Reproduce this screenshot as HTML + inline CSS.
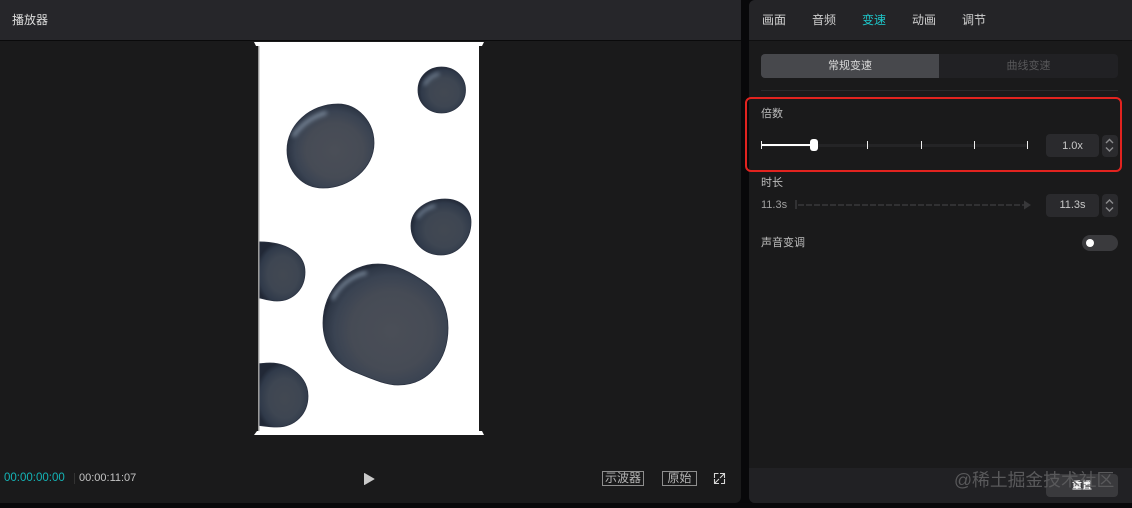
<!DOCTYPE html>
<html><head><meta charset="utf-8">
<style>
*{margin:0;padding:0;box-sizing:border-box}
html{background:#08080a}
html,body{width:1132px;height:508px;overflow:hidden;font-family:"Liberation Sans","Noto Sans CJK SC",sans-serif}
body{background:#08080a;filter:blur(.3px)}
.a{position:absolute;white-space:nowrap}
#left{left:0;top:0;width:741px;height:503px;background:#1a1a1b;border-radius:0 0 6px 0;overflow:hidden}
#lh{left:0;top:0;width:741px;height:41px;background:#26262a;border-bottom:1px solid #0a0a0b}
#right{left:749px;top:0;width:383px;height:503px;background:#1a1a1b;border-radius:6px 0 0 6px;overflow:hidden}
#rh{left:0;top:0;width:383px;height:41px;background:#242427;border-bottom:1px solid #0f0f10}
.t{font-size:12px;line-height:16px;color:#d0d0d0}
.tick{width:1px;height:8px;background:#eee;top:141px}
.inp{background:#2a2a2d;border-radius:4px;color:#c8c8c8;font-size:11px;text-align:center}
.sp{background:#2a2a2d;border-radius:4px}
.tag{border:1px solid #8e8e8e;color:#b4b4b4;font-size:12px;line-height:12px;height:15px;text-align:center;overflow:hidden}
</style></head>
<body>
<div class="a" id="left"></div>
<div class="a" id="lh"></div>
<div class="a t" style="left:12px;top:12px;color:#dedede">播放器</div>

<svg class="a" style="left:0;top:0" width="741" height="503" viewBox="0 0 741 503">
<defs>
<radialGradient id="g" cx="0.55" cy="0.55" r="0.56">
<stop offset="0" stop-color="#4a4e57"/><stop offset="0.58" stop-color="#464b55"/><stop offset="0.82" stop-color="#3a4352"/><stop offset="0.95" stop-color="#2e3746"/><stop offset="1" stop-color="#232a38"/>
</radialGradient>
<radialGradient id="s" cx="0.55" cy="0.55" r="0.56">
<stop offset="0" stop-color="#424852"/><stop offset="0.55" stop-color="#3e4652"/><stop offset="0.85" stop-color="#303a4a"/><stop offset="1" stop-color="#212836"/>
</radialGradient>
<filter id="bl" x="-40%" y="-40%" width="180%" height="180%"><feGaussianBlur stdDeviation="2"/></filter>
<clipPath id="c"><rect x="259.500" y="42" width="220" height="393"/></clipPath>
</defs>
<rect x="258" y="42" width="221" height="393" fill="#fff"/>
<rect x="258" y="42" width="1.400" height="393" fill="#9a9a9a"/>
<path d="M254 42h6v4h-4zM478 42h6l-2 4h-4zM254 435h6v-4h-3zM478 435h6l-2-4h-4z" fill="#fff"/>
<g clip-path="url(#c)" stroke="#2a3140" stroke-width=".8">
<path d="M441.500 67C455 67 465.500 77 465.500 90C465.500 103 455 113 441.500 113C428 113 418 103 418 90C418 77 428 67 441.500 67Z" fill="url(#s)"/>
<path d="M338 104C358 104 374 122 374 143C374 168 350 188 323 188C302 188 287 171 287 150C287 125 310 104 338 104Z" fill="url(#g)"/>
<path d="M445 199C460 199 471 208 471 222C471 240 458 255 441 255C424 255 411 242 411 226C411 210 427 199 445 199Z" fill="url(#s)"/>
<path d="M256 242C285 241 305 253 305 272C305 289 293 301 277 301C270 301 264 299 256 297Z" fill="url(#s)"/>
<path d="M378 264C396 264 412 273 426 283C440 293 448 308 448 328C448 360 428 385 398 385C385 385 370 378 355 372C335 364 323 345 323 323C323 290 348 264 378 264Z" fill="url(#g)"/>
<path d="M256 364C262 363.500 266 363 270 363C291 363 308 378 308 396C308 414 295 427 277 427C270 427 264 426 256 425Z" fill="url(#s)"/>
</g>
<g fill="none" stroke="#9fb0c3" stroke-linecap="round" filter="url(#bl)" opacity=".62">
<path d="M294 135C301 125 312 117 325 113" stroke-width="4"/>
<path d="M333 298C339 286 351 276 365 273" stroke-width="4"/>
<path d="M425 84C428 79 432 76 438 74" stroke-width="3"/>
<path d="M418 217C421 212 427 208 434 206" stroke-width="3"/>
</g>
<path d="M364.500 473.500L374 479L364.500 484.500Z" fill="#c9c9c9" stroke="#c9c9c9" stroke-width="1" stroke-linejoin="round"/>
<rect x="74" y="473" width="1" height="11" fill="#333"/>
<g fill="none" stroke="#d8d8d8" stroke-width="1.100">
<path d="M714.500 478V473.500H718.500M720 473.500H724.500V478M724.500 473.500L720 478M714.500 479V483.500H719M714.500 483.500L719 479M724.500 479V483.500H721"/>
</g>
</svg>

<div class="a" style="left:4px;top:471px;font-size:11.500px;line-height:14px;color:#14b4b6">00:00:00:00</div>
<div class="a" style="left:79px;top:471px;font-size:11px;line-height:14px;color:#c4c4c4">00:00:11:07</div>
<div class="a tag" style="left:602px;top:471px;width:42px">示波器</div>
<div class="a tag" style="left:662px;top:471px;width:35px">原始</div>

<div class="a" id="right">
  <div class="a" id="rh"></div>
  <div class="a" style="left:0;top:468px;width:383px;height:35px;background:#212124"></div>
</div>
<div class="a t" style="left:762px;top:12px">画面</div>
<div class="a t" style="left:812px;top:12px">音频</div>
<div class="a t" style="left:862px;top:12px;color:#1ec6c9">变速</div>
<div class="a t" style="left:912px;top:12px">动画</div>
<div class="a t" style="left:962px;top:12px">调节</div>

<div class="a" style="left:761px;top:54px;width:357px;height:24px;background:#212124;border-radius:4px"></div>
<div class="a" style="left:761px;top:54px;width:178px;height:24px;background:#47484c;border-radius:4px 0 0 4px;text-align:center;font-size:11px;line-height:24px;color:#d8d8d8">常规变速</div>
<div class="a" style="left:939px;top:54px;width:179px;height:24px;text-align:center;font-size:11px;line-height:24px;color:#58585a">曲线变速</div>
<div class="a" style="left:761px;top:90px;width:357px;height:1px;background:#2a2a2c"></div>

<div class="a" style="left:745px;top:97px;width:377px;height:75px;border:2.500px solid #e2231f;border-radius:6px"></div>
<div class="a" style="left:761px;top:107px;font-size:11px;line-height:15px;color:#bdbdbd">倍数</div>
<div class="a" style="left:761px;top:144px;width:267px;height:3px;background:#242426"></div>
<div class="a" style="left:761px;top:144px;width:53px;height:2px;background:#fff"></div>
<div class="a tick" style="left:761px"></div>
<div class="a tick" style="left:867px"></div>
<div class="a tick" style="left:921px"></div>
<div class="a tick" style="left:974px"></div>
<div class="a tick" style="left:1027px"></div>
<div class="a" style="left:810px;top:139px;width:8px;height:12px;background:#fff;border-radius:3px"></div>
<div class="a inp" style="left:1046px;top:134px;width:53px;height:23px;line-height:24px">1.0x</div>
<div class="a sp" style="left:1102px;top:135px;width:16px;height:22px"></div>

<div class="a" style="left:761px;top:176px;font-size:11px;line-height:15px;color:#bdbdbd">时长</div>
<div class="a" style="left:761px;top:198px;font-size:11px;line-height:14px;color:#a0a0a0">11.3s</div>
<div class="a inp" style="left:1046px;top:194px;width:53px;height:23px;line-height:23px">11.3s</div>
<div class="a sp" style="left:1102px;top:194px;width:16px;height:23px"></div>
<div class="a" style="left:761px;top:236px;font-size:11px;line-height:15px;color:#bdbdbd">声音变调</div>
<div class="a" style="left:1082px;top:235px;width:36px;height:16px;background:#3a3a3d;border-radius:8px"></div>
<div class="a" style="left:1086px;top:239px;width:8px;height:8px;background:#fff;border-radius:50%"></div>

<div class="a" style="left:1046px;top:474px;width:72px;height:23px;background:#3a3a3d;border-radius:4px"></div>
<div class="a" style="left:1072px;top:480px;font-size:10px;line-height:14px;color:#fff;font-weight:bold">重置</div>
<div class="a" style="left:954px;top:469px;font-size:17.800px;line-height:22px;color:#59595b">@稀土掘金技术社区</div>

<svg class="a" style="left:0;top:0" width="1132" height="508" viewBox="0 0 1132 508">
<g fill="none" stroke="#8b8b8d" stroke-width="1.400">
<path d="M1106 143L1109.500 139.500L1113 143M1106 147.500L1109.500 151L1113 147.500"/>
<path d="M1106 203.500L1109.500 200L1113 203.500M1106 207.500L1109.500 211L1113 207.500"/>
</g>
<path d="M796 200V209" stroke="#3a3a3c" stroke-width="1.500"/>
<path d="M798 205H1024" stroke="#313133" stroke-width="2" stroke-dasharray="6 2"/>
<path d="M1024 200.500L1031 205L1024 209.500Z" fill="#38383a"/>
</svg>
</body></html>
